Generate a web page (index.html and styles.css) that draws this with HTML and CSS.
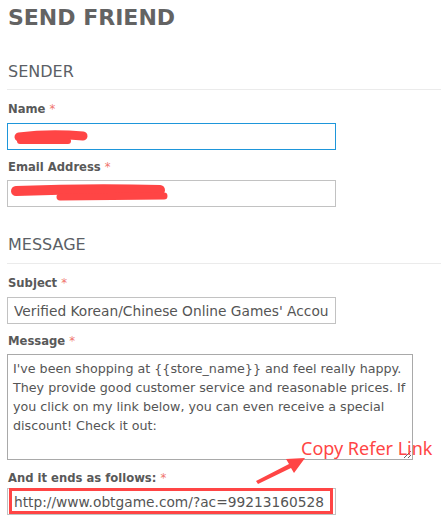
FILE: index.html
```html
<!DOCTYPE html>
<html lang="en">
<head>
  <meta charset="UTF-8" />
  <meta name="viewport" content="width=device-width, initial-scale=1.0"/>
  <title>Send Friend</title>
  <link rel="stylesheet" href="styles.css">
</head>
<body>
  <h1 class="page-title">SEND FRIEND</h1>

  <form class="send-form">
    <h2 class="section-title">SENDER</h2>

    <label class="field-label">Name <em>*</em></label>
    <input class="text-input is-focused" type="text" name="name">

    <label class="field-label">Email Address <em>*</em></label>
    <input class="text-input" type="text" name="email">

    <h2 class="section-title section-message">MESSAGE</h2>

    <label class="field-label">Subject <em>*</em></label>
    <input class="text-input" type="text" name="subject" value="Verified Korean/Chinese Online Games' Accounts Trading">

    <label class="field-label">Message <em>*</em></label>
    <textarea class="text-area" name="message">I've been shopping at {{store_name}} and feel really happy. They provide good customer service and reasonable prices. If you click on my link below, you can even receive a special discount! Check it out:</textarea>

    <label class="field-label">And it ends as follows: <em>*</em></label>
    <input class="text-input" type="text" name="link" value="http://www.obtgame.com/?ac=99213160528">
  </form>

  <!-- screenshot markup: redactions, arrow and the highlight box -->
  <svg class="markup" width="441" height="522" viewBox="0 0 441 522">
    <g stroke="#ff4545" stroke-linecap="round" fill="none">
      <path d="M19 137 Q50 133 83 136" stroke-width="9"/>
      <path d="M20 141 L68 141" stroke-width="6"/>
      <path d="M16 191 Q90 188 160 190" stroke-width="10"/>
      <path d="M60 197 L164 196" stroke-width="7"/>
    </g>
    <rect x="10.5" y="489.5" width="321" height="23" fill="none" stroke="#ff4545" stroke-width="3"/>
    <polygon points="256,481 289,464 286,459 305,458 294,473 291,468 258,484" fill="#ff4545"/>
  </svg>
  <div class="markup-note">Copy Refer Link</div>
</body>
</html>
```

FILE: styles.css
```css
body {
  margin: 0;
  padding: 5px 0 0 7px;
  position: relative;
  font-family: "DejaVu Sans", Verdana, sans-serif;
  color: #555;
  background: #fff;
}
.page-title {
  margin: 0;
  font-size: 22px;
  line-height: 26px;
  font-weight: bold;
  color: #636363;
  padding-left: 1px;
}
.send-form {
  display: flex;
  flex-direction: column;
  align-items: flex-start;
}
.section-title {
  align-self: stretch;
  margin: 31px 0 0;
  padding: 0 0 7px 1px;
  font-size: 16px;
  line-height: 20px;
  font-weight: normal;
  color: #5b5f66;
  border-bottom: 1px solid #ebebeb;
}
.section-message {
  margin-top: 28px;
  padding-bottom: 8px;
}
.field-label {
  display: block;
  margin: 10px 0 5px;
  padding-left: 1px;
  font-size: 11.6px;
  line-height: 15px;
  font-weight: bold;
  color: #595959;
}
.section-title + .field-label {
  margin-top: 12px;
  margin-bottom: 6px;
}
.text-area + .field-label {
  margin-top: 11px;
  margin-bottom: 2px;
}
.field-label em {
  font-style: normal;
  font-weight: normal;
  color: #f0766e;
}
.text-input {
  box-sizing: border-box;
  width: 329px;
  height: 27px;
  margin: 0;
  padding: 0 6px;
  border: 1px solid #c2c2c2;
  font-family: inherit;
  font-size: 13.75px;
  color: #555;
  background: #fff;
  outline: none;
}
.text-input.is-focused {
  border-color: #1e96da;
}
.text-area {
  box-sizing: border-box;
  width: 406px;
  height: 106px;
  margin: 0;
  padding: 4px 2px 0 5px;
  border: 1px solid #a9a9a9;
  font-family: inherit;
  font-size: 12.7px;
  line-height: 19px;
  color: #555;
  resize: both;
  outline: none;
}
.markup {
  position: absolute;
  left: 0;
  top: 0;
  pointer-events: none;
}
.markup-note {
  position: absolute;
  left: 301px;
  top: 436px;
  font-family: "Noto Sans", sans-serif;
  font-size: 18px;
  line-height: 24px;
  color: #ff4545;
  pointer-events: none;
}
```
